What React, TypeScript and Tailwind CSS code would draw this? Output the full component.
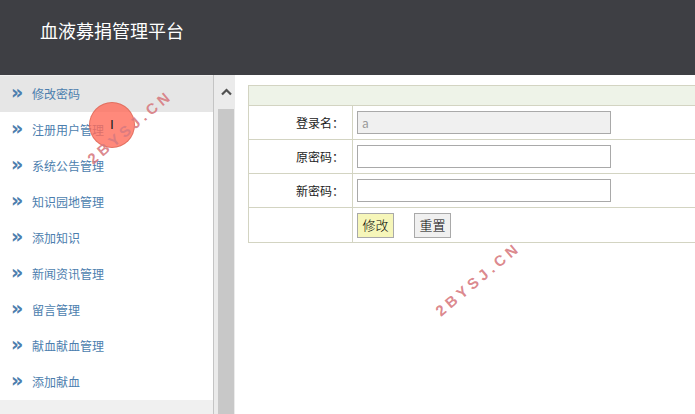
const MENU = [
  "修改密码",
  "注册用户管理",
  "系统公告管理",
  "知识园地管理",
  "添加知识",
  "新闻资讯管理",
  "留言管理",
  "献血献血管理",
  "添加献血",
];

const FONT = "font-['Noto_Sans_CJK_SC','Liberation_Sans',sans-serif]";

function Watermark({ className }: { className: string }) {
  return (
    <div
      className={`pointer-events-none absolute origin-left -rotate-[40deg] text-[15px] font-bold tracking-[4px] text-[#d77a80]/90 font-['Liberation_Sans',sans-serif] ${className}`}
    >
      2BYSJ.CN
    </div>
  );
}

export default function App() {
  return (
    <div className={`relative h-[414px] w-[695px] overflow-hidden bg-white ${FONT}`}>
      {/* Header */}
      <div className="flex h-[75px] items-start bg-[#3e3f44] pl-10 pt-[17px] text-[18px] text-white">
        血液募捐管理平台
      </div>

      <div className="flex h-[339px]">
        {/* Sidebar */}
        <div className="flex w-[213px] flex-col bg-[#f0f0f0] pt-px">
          {MENU.map((item, i) => (
            <div
              key={item}
              className={`flex h-9 items-center text-[12px] text-[#4c7eae] ${
                i === 0 ? "bg-[#e6e6e6]" : "bg-white"
              }`}
            >
              <span className="w-8 pb-[3px] pl-[11px] text-[19px] font-bold leading-none font-['DejaVu_Sans',sans-serif]">
                »
              </span>
              <span>{item}</span>
            </div>
          ))}
        </div>

        {/* Scrollbar */}
        <div className="flex w-[22px] border-l border-[#c4c4c4] bg-[#ebebeb]">
          <div className="ml-[4px] flex w-[16px] flex-col">
            <div className="flex h-[34px] items-center justify-center">
              <svg width="11" height="8" viewBox="0 0 11 8">
                <path d="M1 6.5 L5.5 2 L10 6.5" fill="none" stroke="#505050" strokeWidth="2.2" />
              </svg>
            </div>
            <div className="flex-1 bg-[#c8c8c8]" />
          </div>
        </div>

        {/* Main */}
        <div className="flex-1 overflow-hidden pl-[13px] pt-[10px]">
          <table className="w-[520px] border-collapse text-[12px] text-[#222]">
            <tbody>
              <tr>
                <td colSpan={2} className="h-[20px] border border-[#d3d4c2] bg-[#eef3e8]" />
              </tr>
              {[
                { label: "登录名：", value: "a", disabled: true },
                { label: "原密码：", value: "", disabled: false },
                { label: "新密码：", value: "", disabled: false },
              ].map((row) => (
                <tr key={row.label}>
                  <td className="h-[34px] w-[104px] border border-[#d3d4c2] pr-2 text-right">
                    {row.label}
                  </td>
                  <td className="border border-[#d3d4c2] pl-1">
                    <input
                      readOnly
                      value={row.value}
                      className={`block h-[23px] w-[254px] border border-[#a9a9a9] px-1 text-[12px] text-[#999] outline-none ${
                        row.disabled ? "bg-[#f0f0f0]" : "bg-white"
                      }`}
                    />
                  </td>
                </tr>
              ))}
              <tr>
                <td className="h-[35px] border border-[#d3d4c2]" />
                <td className="border border-[#d3d4c2] pl-1">
                  <div className="flex items-center gap-[20px]">
                    <button className="h-[25px] w-[37px] border border-[#a9a9a9] bg-[#f6f6b9] text-[13px] font-light text-black">
                      修改
                    </button>
                    <button className="h-[25px] w-[37px] border border-[#a9a9a9] bg-[#f0f0f0] text-[13px] font-light text-black">
                      重置
                    </button>
                  </div>
                </td>
              </tr>
            </tbody>
          </table>
        </div>
      </div>

      {/* Cursor highlight */}
      <div className="pointer-events-none absolute left-[89px] top-[102px] h-[46px] w-[46px] rounded-full border border-[#d06050]/60 bg-[#ff6b5a]/80" />
      <div className="pointer-events-none absolute left-[110px] top-[118px] text-[13px] leading-none text-[#222] font-['DejaVu_Sans',sans-serif]">
        I
      </div>

      <Watermark className="left-[90px] top-[150px]" />
      <Watermark className="left-[438px] top-[302px]" />
    </div>
  );
}
